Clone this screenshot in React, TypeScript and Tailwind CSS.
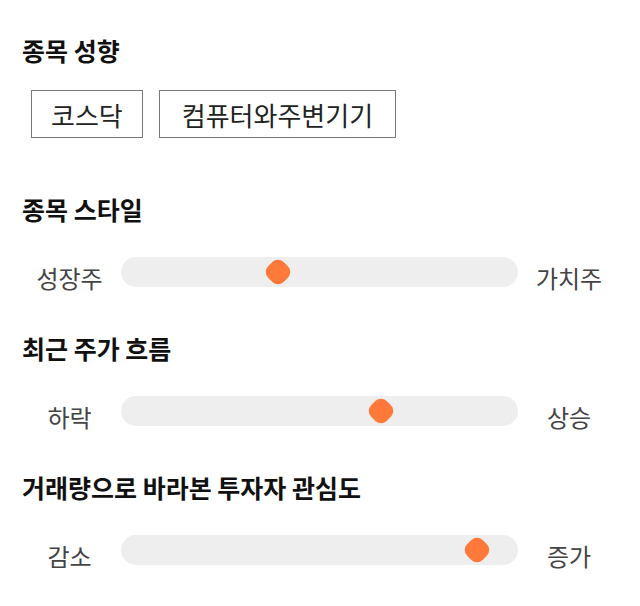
const sections = [
  { title: "종목 스타일", left: "성장주", right: "가치주", pos: 39.5 },
  { title: "최근 주가 흐름", left: "하락", right: "상승", pos: 65.5 },
  { title: "거래량으로 바라본 투자자 관심도", left: "감소", right: "증가", pos: 89.7 },
];

function Slider({ left, right, pos }: { left: string; right: string; pos: number }) {
  return (
    <div className="flex items-center h-[30px]">
      <span className="w-[121px] pl-[18px] text-center text-[24px] leading-[30px] text-[#444] translate-y-[6px]">{left}</span>
      <div className="relative flex-1 h-[30px] rounded-full bg-[#eeeeee]">
        <div
          className="absolute top-1/2 w-[22px] h-[22px] -translate-x-1/2 -translate-y-1/2 rotate-45 rounded-[8px] bg-[#ff7a3a]"
          style={{ left: `${pos}%` }}
        />
      </div>
      <span className="w-[102px] text-center text-[24px] leading-[30px] text-[#444] translate-y-[6px]">{right}</span>
    </div>
  );
}

export default function App() {
  return (
    <div className="w-[640px] h-[606px] bg-white pr-[20px] pt-[33px] text-[#111]" style={{ fontFamily: '"Noto Sans CJK KR", "Noto Sans", sans-serif' }}>
      <h2 className="pl-[22px] text-[25px] font-bold leading-[34px]">종목 성향</h2>
      <div className="flex gap-[16px] mt-[23px] ml-[31px]">
        <div className="border border-[#777] h-[48px] px-[19px] flex items-center text-[26px] text-[#222]">코스닥</div>
        <div className="border border-[#777] h-[48px] px-[22px] flex items-center text-[26px] text-[#222]">컴퓨터와주변기기</div>
      </div>
      {sections.map((s, i) => (
        <div key={s.title} className={i === 0 ? "mt-[54px]" : "mt-[44px]"}>
          <h2 className="pl-[22px] text-[25px] font-bold leading-[34px]">{s.title}</h2>
          <div className="mt-[31px]">
            <Slider left={s.left} right={s.right} pos={s.pos} />
          </div>
        </div>
      ))}
    </div>
  );
}
